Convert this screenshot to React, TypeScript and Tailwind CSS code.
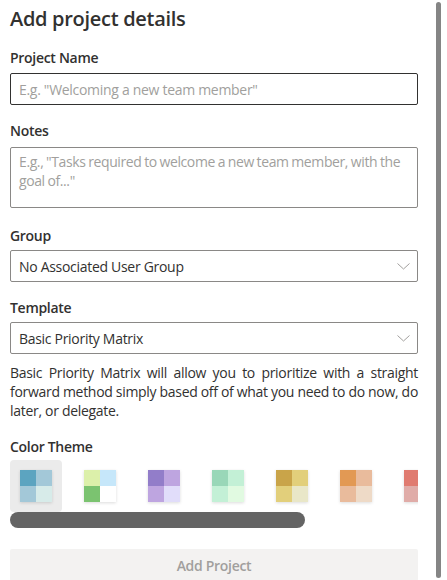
import React from 'react';

const themes = [
  ['#5ca4c0', '#a3c8d8', '#a3c8d8', '#d7ebe9'],
  ['#dcf0aa', '#c6e7fa', '#7bc370', '#ffffff'],
  ['#927dc9', '#bea5e0', '#bea5e0', '#e1ddfa'],
  ['#99d7b8', '#c3f0d6', '#c3f0d6', '#e1fae1'],
  ['#c9a449', '#e2cf7b', '#e2cf7b', '#e9e7c8'],
  ['#e29954', '#e9bb9c', '#e9bb9c', '#eedac7'],
  ['#e07b70', '#e9b3ad', '#e0aca8', '#efd6d3'],
];

function Chevron() {
  return (
    <svg width="13" height="7" viewBox="0 0 13 7" fill="none" className="shrink-0">
      <path d="M0.5 0.5 L6.5 6 L12.5 0.5" stroke="#a19f9d" strokeWidth="1" />
    </svg>
  );
}

function Label({ children }: { children: React.ReactNode }) {
  return <div className="pt-[2px] text-[14px] leading-[20px] font-semibold text-[#323130]">{children}</div>;
}

function Select({ value }: { value: string }) {
  return (
    <div className="mt-[4px] flex h-[32px] items-center justify-between rounded-[2px] border border-[#8a8886] pl-[8px] pr-[7px]">
      <span className="text-[14px] text-[#323130]">{value}</span>
      <Chevron />
    </div>
  );
}

export default function App() {
  return (
    <div
      className="flex h-[580px] w-[447px] overflow-hidden bg-white tracking-[-0.3px]"
      style={{ fontFamily: '"Segoe UI", "Open Sans", "Noto Sans", sans-serif' }}
    >
      <div className="ml-[10px] w-[408px] shrink-0">
        <h1 className="pt-[5px] text-[20px] leading-[28px] font-semibold text-[#323130]">
          Add project details
        </h1>

        <div className="mt-[13px]">
          <Label>Project Name</Label>
          <div className="mt-[5px] flex h-[32px] items-center rounded-[2px] border border-[#323130] px-[8px]">
            <span className="text-[14px] text-[#a19f9d]">E.g. "Welcoming a new team member"</span>
          </div>
        </div>

        <div className="mt-[14px]">
          <Label>Notes</Label>
          <div className="mt-[6px] h-[61px] rounded-[2px] border border-[#8a8886] px-[8px] pt-[4px]">
            <p className="text-[14px] leading-[19px] tracking-[-0.4px] text-[#a19f9d] [word-spacing:-0.5px]">
              E.g., "Tasks required to welcome a new team member, with the goal of..."
            </p>
          </div>
        </div>

        <div className="mt-[16px]">
          <Label>Group</Label>
          <Select value="No Associated User Group" />
        </div>

        <div className="mt-[14px]">
          <Label>Template</Label>
          <Select value="Basic Priority Matrix" />
          <div className="mt-[9px] text-[14px] leading-[19px] text-[#323130]">
            <span className="block text-justify [text-align-last:justify]">
              Basic Priority Matrix will allow you to prioritize with a straight
            </span>
            <span className="block text-justify [text-align-last:justify] [word-spacing:-1px]">
              forward method simply based off of what you need to do now, do
            </span>
            <span className="block">later, or delegate.</span>
          </div>
        </div>

        <div className="mt-[15px]">
          <Label>Color Theme</Label>
          <div className="mt-[3px] overflow-hidden">
            <div className="flex gap-[12px]">
              {themes.map((c, i) => (
                <div
                  key={i}
                  className={
                    i === 0
                      ? 'flex h-[52px] w-[52px] shrink-0 items-center justify-center rounded-[4px] bg-[#ebebeb]'
                      : 'flex h-[52px] w-[52px] shrink-0 items-center justify-center rounded-[4px]'
                  }
                >
                  <div className="grid h-[32px] w-[32px] grid-cols-2 grid-rows-2 shadow-[0_1px_3px_rgba(0,0,0,0.14)]">
                    {c.map((col, j) => (
                      <div key={j} style={{ backgroundColor: col }} />
                    ))}
                  </div>
                </div>
              ))}
            </div>
            <div className="h-[16px] w-[295px] rounded-full bg-[#646464]" />
          </div>
        </div>

        <button className="mt-[21px] flex h-[32px] w-full items-center justify-center rounded-[2px] bg-[#f3f2f1] text-[14px] font-semibold text-[#a19f9d]">
          Add Project
        </button>
      </div>

      <div className="ml-[18px] my-[2px] w-[5px] shrink-0 rounded-full bg-[#858585]" />
    </div>
  );
}
